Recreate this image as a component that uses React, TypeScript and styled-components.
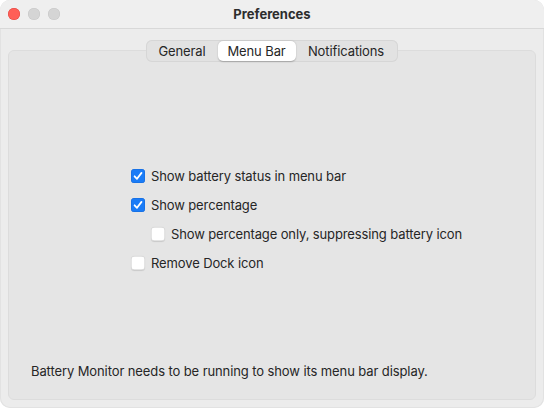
import React, { useState } from "react";
import styled, { createGlobalStyle } from "styled-components";

const Global = createGlobalStyle`
  html, body { margin: 0; padding: 0; background: #ffffff; }
  body { font-family: Inter, "Liberation Sans", Arial, sans-serif; -webkit-font-smoothing: antialiased; }
  * { box-sizing: border-box; }
`;

const Window = styled.div`
  width: 544px;
  height: 408px;
  background: #ececec;
  border-radius: 10px;
  overflow: hidden;
  display: flex;
  flex-direction: column;
  box-shadow: inset 0 0 0 1px #e2e2e2;
`;

const TitleBar = styled.div`
  height: 29px;
  flex: none;
  display: grid;
  grid-template-columns: 80px 1fr 80px;
  align-items: center;
  border-bottom: 1px solid #d8d8d8;
  background: #efefef;
`;

const Lights = styled.div`
  display: flex;
  gap: 8px;
  padding-left: 8px;
`;

const Light = styled.span<{ $c: string; $b: string }>`
  width: 12px;
  height: 12px;
  border-radius: 50%;
  background: ${(p) => p.$c};
  box-shadow: inset 0 0 0 0.5px ${(p) => p.$b};
`;

const Title = styled.div`
  text-align: center;
  font-size: 13px;
  font-weight: 700;
  color: #2d2d2d;
`;

const Body = styled.div`
  flex: 1;
  display: flex;
  flex-direction: column;
  padding: 11px 8px 8px;
`;

const TabsRow = styled.div`
  display: flex;
  justify-content: center;
  margin-bottom: -12px;
  position: relative;
  z-index: 1;
  padding-right: 1px;
`;

const Segmented = styled.div`
  display: flex;
  padding: 1px;
  height: 22px;
  border-radius: 6px;
  background: #e2e2e2;
  box-shadow: inset 0 0 0 1px #d6d6d6;
`;

const Segment = styled.button<{ $active: boolean; $w: number }>`
  width: ${(p) => p.$w}px;
  height: 20px;
  border: none;
  border-radius: 5px;
  font-family: inherit;
  font-size: 13px;
  letter-spacing: -0.1px;
  color: #262626;
  padding: 0;
  background: ${(p) => (p.$active ? "#ffffff" : "transparent")};
  box-shadow: ${(p) => (p.$active ? "0 0.5px 1.5px rgba(0,0,0,0.25)" : "none")};
  cursor: default;
`;

const Panel = styled.div`
  flex: 1;
  background: #e5e5e5;
  border: 1px solid #dcdcdc;
  border-radius: 6px;
  display: flex;
  flex-direction: column;
  padding: 116px 22px 20px 122px;
`;

const Options = styled.div`
  display: flex;
  flex-direction: column;
  gap: 11px;
`;

const Row = styled.label<{ $indent?: boolean }>`
  display: flex;
  align-items: center;
  gap: 6px;
  height: 18px;
  padding-left: ${(p) => (p.$indent ? 20 : 0)}px;
  font-size: 13px;
  letter-spacing: -0.12px;
  color: #262626;
`;

const Box = styled.span<{ $checked: boolean }>`
  width: 14px;
  height: 14px;
  border-radius: 3.5px;
  flex: none;
  display: flex;
  align-items: center;
  justify-content: center;
  background: ${(p) => (p.$checked ? "#1a7cf7" : "#ffffff")};
  box-shadow: ${(p) =>
    p.$checked ? "inset 0 0 0 0.5px #1568d8" : "inset 0 0 0 0.5px #c9c9c9, 0 0.5px 1px rgba(0,0,0,0.12)"};
`;

const Footer = styled.div`
  margin-top: auto;
  margin-left: -100px;
  font-size: 13px;
  letter-spacing: -0.1px;
  color: #262626;
`;

const Check = () => (
  <svg width="10" height="10" viewBox="0 0 10 10">
    <path d="M1.6 5.3 L4 7.8 L8.5 1.9" fill="none" stroke="#fff" strokeWidth="1.8" strokeLinecap="round" strokeLinejoin="round" />
  </svg>
);

const CheckRow = ({ label, checked, indent }: { label: string; checked: boolean; indent?: boolean }) => (
  <Row $indent={indent}>
    <Box $checked={checked}>{checked && <Check />}</Box>
    {label}
  </Row>
);

export default function App() {
  const [tab, setTab] = useState("Menu Bar");
  const tabs: [string, number][] = [
    ["General", 71],
    ["Menu Bar", 78],
    ["Notifications", 101],
  ];
  return (
    <>
      <Global />
      <Window>
        <TitleBar>
          <Lights>
            <Light $c="#ff5f57" $b="#e0443e" />
            <Light $c="#d5d5d5" $b="#c6c6c6" />
            <Light $c="#d5d5d5" $b="#c6c6c6" />
          </Lights>
          <Title>Preferences</Title>
          <span />
        </TitleBar>
        <Body>
          <TabsRow>
            <Segmented>
              {tabs.map(([t, w]) => (
                <Segment key={t} $w={w} $active={t === tab} onClick={() => setTab(t)}>
                  {t}
                </Segment>
              ))}
            </Segmented>
          </TabsRow>
          <Panel>
            <Options>
              <CheckRow label="Show battery status in menu bar" checked />
              <CheckRow label="Show percentage" checked />
              <CheckRow label="Show percentage only, suppressing battery icon" checked={false} indent />
              <CheckRow label="Remove Dock icon" checked={false} />
            </Options>
            <Footer>Battery Monitor needs to be running to show its menu bar display.</Footer>
          </Panel>
        </Body>
      </Window>
    </>
  );
}
